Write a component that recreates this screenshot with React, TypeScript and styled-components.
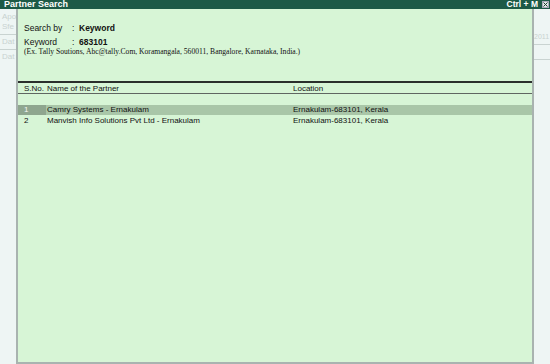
import React from "react";
import styled, { createGlobalStyle } from "styled-components";

const Global = createGlobalStyle`
  html, body { margin: 0; padding: 0; background: #eef5f4; }
  body { font-family: "Liberation Sans", Arial, sans-serif; }
  * { box-sizing: border-box; }
`;

const Page = styled.div`
  width: 550px;
  height: 364px;
  display: flex;
  flex-direction: column;
  overflow: hidden;
  background: #eef5f4;
`;

const TitleBar = styled.div`
  height: 9px;
  background: #1d5a47;
  display: flex;
  align-items: center;
  padding-left: 4px;
  color: #fff;
  font-weight: bold;
  font-size: 9px;
  line-height: 9px;
`;

const Title = styled.span`
  flex: 1;
`;

const Shortcut = styled.span`
  margin-right: 4px;
  font-size: 8.5px;
`;

const CloseBox = styled.span`
  width: 7px;
  height: 7px;
  margin-right: 1px;
  background: #dfe9e6;
  border: 1px solid #aab;
  display: flex;
  align-items: center;
  justify-content: center;
`;

const Body = styled.div`
  flex: 1;
  display: flex;
`;

const Strip = styled.div<{ $w: number }>`
  width: ${(p) => p.$w}px;
  display: flex;
  flex-direction: column;
  padding-top: 3px;
  color: #c8d2d0;
  font-size: 8px;
  overflow: hidden;
`;

const StripText = styled.div<{ $small?: boolean }>`
  height: 10px;
  line-height: 10px;
  padding-left: ${(p) => (p.$small ? 0 : 2)}px;
  font-size: ${(p) => (p.$small ? 7 : 8)}px;
  white-space: nowrap;
`;

const StripRule = styled.div`
  height: 1px;
  background: #c9d3d1;
  margin: 2px 0 2px;
`;

const Panel = styled.div`
  flex: 1;
  background: #d7f5d6;
  border-left: 2px solid #a9b3b0;
  border-right: 2px solid #a9b3b0;
  border-bottom: 2px solid #a9b3b0;
  display: flex;
  flex-direction: column;
  color: #111;
`;

const Info = styled.div`
  padding: 12px 0 0 6px;
  display: flex;
  flex-direction: column;
`;

const InfoRow = styled.div`
  display: grid;
  grid-template-columns: 48px 7px auto;
  font-size: 8.5px;
  height: 14px;
  line-height: 14px;
`;

const Bold = styled.span`
  font-weight: bold;
`;

const Example = styled.div`
  font-family: "Liberation Serif", "Times New Roman", serif;
  font-size: 7.6px;
  line-height: 9px;
  margin-top: -2px;
`;

const Table = styled.div`
  margin-top: 25px;
  border-top: 2px solid #2a2f2c;
  display: flex;
  flex-direction: column;
`;

const Row = styled.div<{ $head?: boolean; $sel?: boolean }>`
  display: grid;
  grid-template-columns: 28px 246px 1fr;
  height: ${(p) => (p.$head ? 11 : 10)}px;
  line-height: ${(p) => (p.$head ? 11 : 10)}px;
  margin-bottom: ${(p) => (p.$head ? 0 : 1)}px;
  font-size: 8px;
  background: ${(p) => (p.$sel ? "#a9c6a8" : "transparent")};
  border-bottom: ${(p) => (p.$head ? "1px solid #5f6661" : "none")};
`;

const Cell = styled.div<{ $num?: boolean; $sel?: boolean }>`
  padding-left: ${(p) => (p.$num ? 6 : 1)}px;
  white-space: nowrap;
  background: ${(p) => (p.$num && p.$sel ? "#8fa68f" : "transparent")};
  color: ${(p) => (p.$num && p.$sel ? "#f4f8f4" : "inherit")};
`;

const Spacer = styled.div`
  height: 11px;
`;

const rows = [
  { n: "1", name: "Camry Systems - Ernakulam", loc: "Ernakulam-683101, Kerala" },
  { n: "2", name: "Manvish Info Solutions Pvt Ltd - Ernakulam", loc: "Ernakulam-683101, Kerala" },
];

export default function App() {
  return (
    <Page>
      <Global />
      <TitleBar>
        <Title>Partner Search</Title>
        <Shortcut>Ctrl + M</Shortcut>
        <CloseBox>
          <svg width="5" height="5" viewBox="0 0 5 5">
            <path d="M0.5 0.5 L4.5 4.5 M4.5 0.5 L0.5 4.5" stroke="#1d3a30" strokeWidth="1" />
          </svg>
        </CloseBox>
      </TitleBar>
      <Body>
        <Strip $w={16}>
          <StripText>Apo</StripText>
          <StripText>Sfe</StripText>
          <StripRule />
          <StripText>Dat</StripText>
          <StripRule />
          <StripText>Dat</StripText>
        </Strip>
        <Panel>
          <Info>
            <InfoRow>
              <span>Search by</span>
              <span>:</span>
              <Bold>Keyword</Bold>
            </InfoRow>
            <InfoRow>
              <span>Keyword</span>
              <span>:</span>
              <Bold>683101</Bold>
            </InfoRow>
            <Example>
              (Ex. Tally Soutions, Abc@tally.Com, Koramangala, 560011, Bangalore, Karnataka, India.)
            </Example>
          </Info>
          <Table>
            <Row $head>
              <Cell $num>S.No.</Cell>
              <Cell>Name of the Partner</Cell>
              <Cell>Location</Cell>
            </Row>
            <Spacer />
            {rows.map((r, i) => (
              <Row key={r.n} $sel={i === 0}>
                <Cell $num $sel={i === 0}>{r.n}</Cell>
                <Cell>{r.name}</Cell>
                <Cell>{r.loc}</Cell>
              </Row>
            ))}
          </Table>
        </Panel>
        <Strip $w={16}>
          <StripText />
          <StripText />
          <StripText $small>2011</StripText>
          <StripRule />
          <StripText />
          <StripRule />
        </Strip>
      </Body>
    </Page>
  );
}
